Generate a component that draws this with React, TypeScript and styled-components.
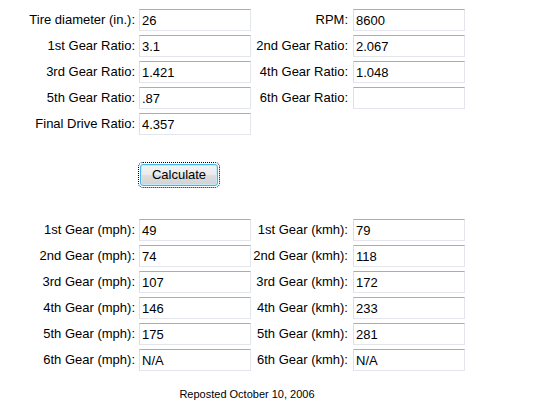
import React from "react";
import styled, { createGlobalStyle } from "styled-components";

const Global = createGlobalStyle`
  html, body { margin: 0; padding: 0; background: #ffffff; }
  body { margin: 8px; font-family: "Liberation Sans", Arial, sans-serif; font-size: 13px; color: #000; }
`;

const Page = styled.div`
  padding-top: 1px;
  width: 478px;
`;

const Grid = styled.div`
  display: grid;
  grid-template-columns: 131px 112px 102px 112px;
  grid-auto-rows: 22px;
  row-gap: 4px;
  align-items: center;
`;

const Label = styled.label<{ $pad: number }>`
  text-align: right;
  padding-right: ${(p) => p.$pad}px;
  white-space: nowrap;
  font-size: 13px;
  line-height: 22px;
`;

const Field = styled.input`
  box-sizing: border-box;
  width: 112px;
  height: 22px;
  margin: 0;
  padding: 1px 2px;
  border: 1px solid #e3e6ec;
  border-top-color: #abadb3;
  border-left-color: #dbdfe6;
  font-family: "Liberation Sans", Arial, sans-serif;
  font-size: 13px;
  color: #000;
  background: #fff;
  outline: none;
`;

const ButtonRow = styled.div`
  margin-top: 29px;
  padding-left: 132px;
  height: 22px;
`;

const CalcButton = styled.button`
  box-sizing: border-box;
  width: 78px;
  height: 22px;
  margin: 0;
  padding: 0 0 1px;
  border: 1px solid #45b4eb;
  border-radius: 3px;
  background: linear-gradient(#f3f3f3 0%, #ebebeb 48%, #dddddd 52%, #d3d3d3 100%);
  box-shadow: inset 0 0 0 1px #c5ebfb;
  outline: 1px dotted #000;
  outline-offset: 1px;
  font-family: "Liberation Sans", Arial, sans-serif;
  font-size: 13px;
  color: #000;
  cursor: pointer;
`;

const Results = styled(Grid)`
  margin-top: 33px;
`;

const Footer = styled.div`
  margin-top: 17px;
  text-align: center;
  font-size: 11px;
  line-height: 13px;
`;

type Pair = [string, string];

const inputs: [Pair, Pair][] = [
  [["Tire diameter (in.):", "26"], ["RPM:", "8600"]],
  [["1st Gear Ratio:", "3.1"], ["2nd Gear Ratio:", "2.067"]],
  [["3rd Gear Ratio:", "1.421"], ["4th Gear Ratio:", "1.048"]],
  [["5th Gear Ratio:", ".87"], ["6th Gear Ratio:", ""]],
];

const mph = ["49", "74", "107", "146", "175", "N/A"];
const kmh = ["79", "118", "172", "233", "281", "N/A"];
const ord = ["1st", "2nd", "3rd", "4th", "5th", "6th"];

export default function App() {
  return (
    <>
      <Global />
      <Page>
        <Grid>
          {inputs.map(([a, b]) => (
            <React.Fragment key={a[0]}>
              <Label $pad={4}>{a[0]}</Label>
              <Field defaultValue={a[1]} />
              <Label $pad={5}>{b[0]}</Label>
              <Field defaultValue={b[1]} />
            </React.Fragment>
          ))}
          <Label $pad={4}>Final Drive Ratio:</Label>
          <Field defaultValue="4.357" />
        </Grid>
        <ButtonRow>
          <CalcButton type="button">Calculate</CalcButton>
        </ButtonRow>
        <Results>
          {ord.map((o, i) => (
            <React.Fragment key={o}>
              <Label $pad={4}>{o} Gear (mph):</Label>
              <Field defaultValue={mph[i]} />
              <Label $pad={5}>{o} Gear (kmh):</Label>
              <Field defaultValue={kmh[i]} />
            </React.Fragment>
          ))}
        </Results>
        <Footer>Reposted October 10, 2006</Footer>
      </Page>
    </>
  );
}
